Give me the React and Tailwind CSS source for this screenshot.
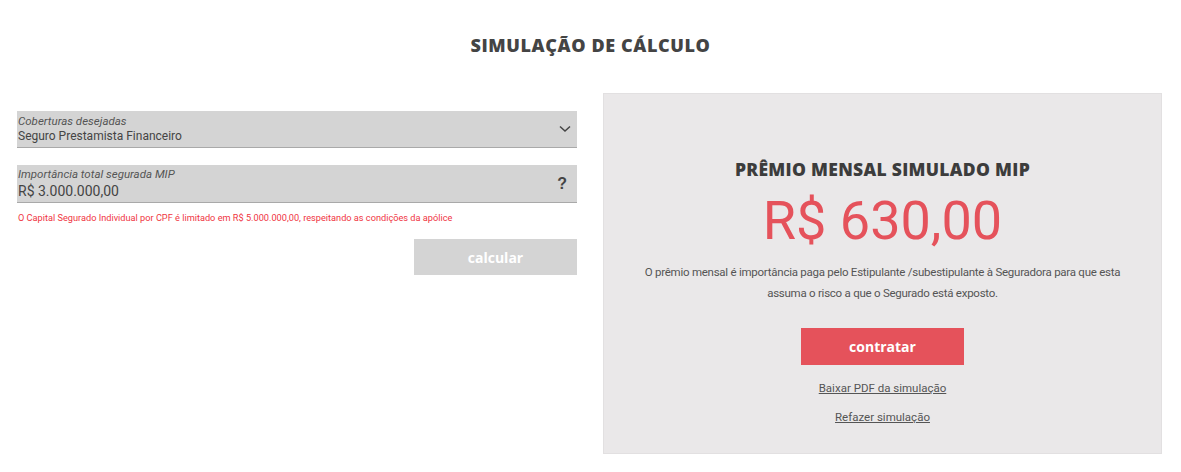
export default function App() {
  return (
    <div className="w-[1181px] h-[472px] bg-white" style={{ fontFamily: "Roboto, 'Liberation Sans', sans-serif" }}>
      <div className="pt-[34px] text-center">
        <h1 className="text-[18px] leading-[22px] font-extrabold text-[#444] tracking-[0.6px]" style={{ fontFamily: "'Open Sans', 'Liberation Sans', sans-serif" }}>
          SIMULAÇÃO DE CÁLCULO
        </h1>
      </div>
      <div className="mt-[37px] pl-[17px] flex gap-[26px]">
        <div className="w-[560px] pt-[18px]">
          <div className="h-[37px] bg-[#d4d4d4] border-b border-[#a9a9a9] pl-[1px] pr-[6px] flex items-center">
            <div className="flex-1">
              <div className="text-[11.5px] leading-[14px] italic text-[#555]">Coberturas desejadas</div>
              <div className="text-[12px] leading-[16px] text-[#444]">Seguro Prestamista Financeiro</div>
            </div>
            <svg width="12" height="8" viewBox="0 0 12 8">
              <path d="M1 1.5 L6 6 L11 1.5" fill="none" stroke="#444" strokeWidth="1.5" />
            </svg>
          </div>
          <div className="mt-[17px] h-[38px] bg-[#d4d4d4] border-b border-[#a9a9a9] pl-[1px] pr-[10px] flex items-center">
            <div className="flex-1">
              <div className="text-[11.5px] leading-[14px] italic text-[#555]">Importância total segurada MIP</div>
              <div className="text-[14px] leading-[20px] text-[#444]">R$ 3.000.000,00</div>
            </div>
            <div className="text-[16px] font-bold text-[#444]" style={{ fontFamily: "'Liberation Sans', sans-serif" }}>?</div>
          </div>
          <div className="mt-[9px] text-[9.2px] leading-[12px] text-[#f0353f] pl-[1px]">
            O Capital Segurado Individual por CPF é limitado em R$ 5.000.000,00, respeitando as condições da apólice
          </div>
          <div className="mt-[15px] flex justify-end">
            <button className="w-[163px] h-[36px] bg-[#d4d4d4] text-white text-[14px] font-bold" style={{ fontFamily: "'Open Sans', 'Liberation Sans', sans-serif" }}>
              calcular
            </button>
          </div>
        </div>
        <div className="w-[559px] h-[361px] bg-[#eae8e9] border border-[#e2e0e1] flex flex-col items-center pt-[64px]">
          <div className="text-[17.5px] leading-[22px] font-extrabold text-[#3c3c3c] tracking-[0.3px]" style={{ fontFamily: "'Open Sans', 'Liberation Sans', sans-serif" }}>
            PRÊMIO MENSAL SIMULADO MIP
          </div>
          <div className="mt-[10px] text-[54px] leading-[62px] text-[#e5525b] font-normal">R$ 630,00</div>
          <div className="mt-[10px] text-[11.5px] leading-[21px] text-[#555] text-center w-[500px] tracking-[-0.25px]">
            O prêmio mensal é importância paga pelo Estipulante /subestipulante à Seguradora para que esta assuma o risco a que o Segurado está exposto.
          </div>
          <button className="mt-[24px] w-[163px] h-[37px] bg-[#e5525b] text-white text-[14px] font-bold" style={{ fontFamily: "'Open Sans', 'Liberation Sans', sans-serif" }}>
            contratar
          </button>
          <a className="mt-[15px] text-[11.5px] leading-[16px] text-[#555] underline">Baixar PDF da simulação</a>
          <a className="mt-[13px] text-[11.5px] leading-[16px] text-[#555] underline">Refazer simulação</a>
        </div>
      </div>
    </div>
  );
}
